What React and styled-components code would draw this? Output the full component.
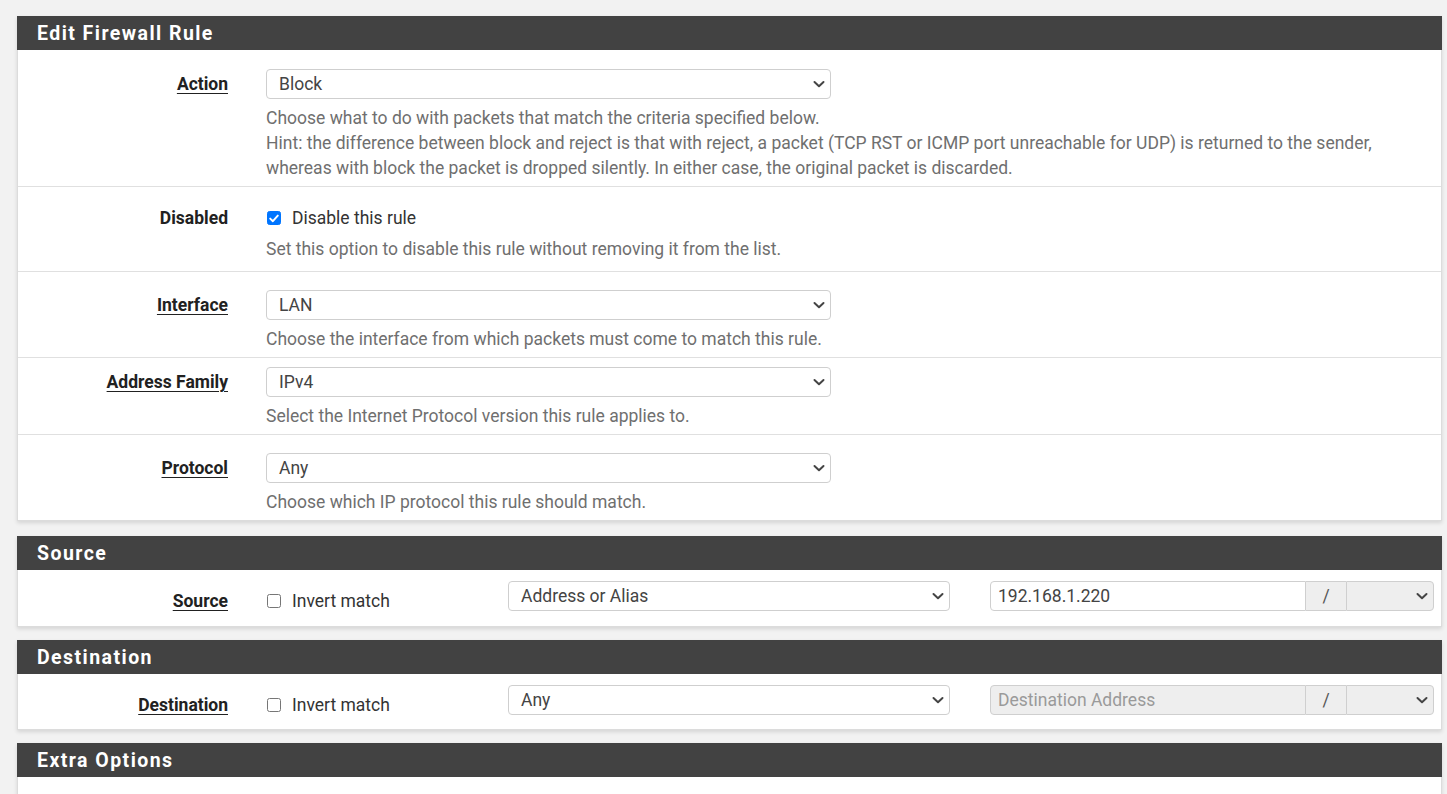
import React from "react";
import styled, { createGlobalStyle } from "styled-components";

const GlobalStyle = createGlobalStyle`
  html, body {
    margin: 0;
    padding: 0;
    background: #f2f2f2;
    font-family: Roboto, "Liberation Sans", Arial, sans-serif;
    font-size: 17.5px;
    color: #212121;
  }
  * { box-sizing: border-box; }
`;

const Page = styled.div`
  padding: 16px 5px 0 17px;
  overflow: hidden;
  height: 794px;
`;

const Panel = styled.section`
  background: #fff;
  border: 1px solid #dcdcdc;
  border-top: 0;
  box-shadow: 0 2px 4px rgba(0, 0, 0, 0.12);
  margin-bottom: ${(p) => p.$gap || 15}px;
`;

const PanelHeading = styled.h2`
  margin: 0 -1px;
  height: 34px;
  background: #424242;
  color: #fff;
  font-size: 19.5px;
  font-weight: 700;
  letter-spacing: 1.45px;
  line-height: 35px;
  padding-left: 20px;
`;

const PanelBody = styled.div`
  height: ${(p) => p.$height || 40}px;
`;

const Row = styled.div`
  display: grid;
  grid-template-columns: 210px 1160px;
  column-gap: 38px;
  padding: ${(p) => p.$top ?? 18}px 0 ${(p) => p.$bottom ?? 5}px;
  border-bottom: ${(p) => (p.$last ? "0" : "1px solid #e0e0e0")};
`;

const Label = styled.div`
  text-align: right;
  font-weight: 700;
  line-height: ${(p) => p.$lh || 30}px;
  margin-top: ${(p) => p.$offset || 0}px;
  padding-right: ${(p) => p.$pr || 0}px;
  color: #212121;
  span {
    text-decoration: ${(p) => (p.$plain ? "none" : "underline")};
    text-decoration-thickness: 1px;
    text-underline-offset: 3px;
  }
`;

const Field = styled.div`
  min-width: 0;
`;

const SelectBox = styled.div`
  position: relative;
  width: ${(p) => p.$width || 565}px;
  height: 30px;
  border: 1px solid #cfcfcf;
  border-radius: ${(p) => p.$radius || "4px"};
  background: ${(p) => p.$bg || "#fff"};
  color: #444;
  line-height: 28px;
  padding-left: 12px;
  white-space: nowrap;
  svg {
    position: absolute;
    right: 5px;
    top: 9px;
  }
`;

const Help = styled.div`
  margin-top: ${(p) => p.$mt ?? 7}px;
  line-height: 25px;
  color: #6f6f6f;
`;

const CheckLine = styled.label`
  display: flex;
  align-items: center;
  gap: 11px;
  height: ${(p) => p.$h || 24}px;
  margin-top: ${(p) => p.$offset || 0}px;
  padding-left: 1px;
  color: #333;
`;

const Box = styled.span`
  width: 14px;
  height: 14px;
  border-radius: 2.5px;
  border: 1px solid ${(p) => (p.$checked ? "#0075ff" : "#767676")};
  background: ${(p) => (p.$checked ? "#0075ff" : "#fff")};
  display: inline-flex;
  align-items: center;
  justify-content: center;
  flex: none;
`;

const AddrRow = styled.div`
  display: grid;
  grid-template-columns: 248px 242px 482px 444px;
  padding: 11px 0 ${(p) => p.$bottom ?? 14}px;
`;

const Group = styled.div`
  display: flex;
  height: 30px;
`;

const TextInput = styled.div`
  flex: 1;
  border: 1px solid #cfcfcf;
  border-radius: 4px 0 0 4px;
  background: ${(p) => (p.$disabled ? "#eeeeee" : "#fff")};
  color: ${(p) => (p.$disabled ? "#9a9a9a" : "#444")};
  line-height: 28px;
  padding-left: 7px;
`;

const Addon = styled.div`
  width: 40px;
  border: 1px solid #cfcfcf;
  border-left: 0;
  border-right: 0;
  background: #eeeeee;
  color: #555;
  text-align: center;
  line-height: 28px;
`;

const Chevron = () => (
  <svg width="12" height="10" viewBox="0 0 12 10" fill="none">
    <path d="M1.5 3 L6 7.2 L10.5 3" stroke="#444" strokeWidth="2" strokeLinecap="round" strokeLinejoin="round" />
  </svg>
);

const Check = () => (
  <svg width="10" height="9" viewBox="0 0 10 9" fill="none">
    <path d="M1.2 4.6 L3.9 7.2 L8.8 1.6" stroke="#fff" strokeWidth="1.9" strokeLinecap="round" strokeLinejoin="round" />
  </svg>
);

const Select = ({ value, ...rest }) => (
  <SelectBox {...rest}>
    {value}
    <Chevron />
  </SelectBox>
);

const Checkbox = ({ checked, children, offset, h }) => (
  <CheckLine $offset={offset} $h={h}>
    <Box $checked={checked}>{checked && <Check />}</Box>
    {children}
  </CheckLine>
);

const AddressRow = ({ label, type, address, disabled, bottom }) => (
  <AddrRow $bottom={bottom}>
    <Label $offset={10} $lh={20} $pr={38}>
      <span>{label}</span>
    </Label>
    <Checkbox offset={9} h={22}>
      Invert match
    </Checkbox>
    <Select value={type} $width={442} />
    <Group>
      <TextInput $disabled={disabled}>{address}</TextInput>
      <Addon>/</Addon>
      <Select value="" $width={88} $bg="#eeeeee" $radius="0 4px 4px 0" />
    </Group>
  </AddrRow>
);

export default function App() {
  return (
    <>
      <GlobalStyle />
      <Page>
        <Panel>
          <PanelHeading>Edit Firewall Rule</PanelHeading>
          <Row $top={19}>
            <Label>
              <span>Action</span>
            </Label>
            <Field>
              <Select value="Block" />
              <Help>
                Choose what to do with packets that match the criteria specified below.
                <br />
                Hint: the difference between block and reject is that with reject, a packet (TCP RST or ICMP
                port unreachable for UDP) is returned to the sender, whereas with block the packet is dropped
                silently. In either case, the original packet is discarded.
              </Help>
            </Field>
          </Row>
          <Row $top={19} $bottom={9}>
            <Label $lh={24} $plain>
              <span>Disabled</span>
            </Label>
            <Field>
              <Checkbox checked>Disable this rule</Checkbox>
              <Help>Set this option to disable this rule without removing it from the list.</Help>
            </Field>
          </Row>
          <Row>
            <Label>
              <span>Interface</span>
            </Label>
            <Field>
              <Select value="LAN" />
              <Help>Choose the interface from which packets must come to match this rule.</Help>
            </Field>
          </Row>
          <Row $top={9}>
            <Label>
              <span>Address Family</span>
            </Label>
            <Field>
              <Select value="IPv4" />
              <Help>Select the Internet Protocol version this rule applies to.</Help>
            </Field>
          </Row>
          <Row $last>
            <Label>
              <span>Protocol</span>
            </Label>
            <Field>
              <Select value="Any" />
              <Help>Choose which IP protocol this rule should match.</Help>
            </Field>
          </Row>
        </Panel>

        <Panel $gap={13}>
          <PanelHeading>Source</PanelHeading>
          <AddressRow label="Source" type="Address or Alias" address="192.168.1.220" />
        </Panel>

        <Panel $gap={13}>
          <PanelHeading>Destination</PanelHeading>
          <AddressRow label="Destination" type="Any" address="Destination Address" disabled bottom={13} />
        </Panel>

        <Panel>
          <PanelHeading>Extra Options</PanelHeading>
          <PanelBody $height={60} />
        </Panel>
      </Page>
    </>
  );
}
